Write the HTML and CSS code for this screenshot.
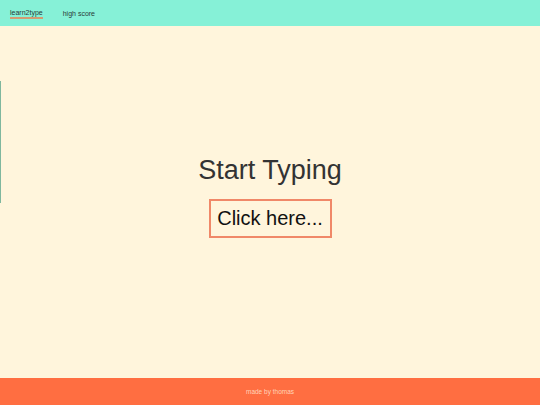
FILE: index.html
```html
<!DOCTYPE html>
<html>
<head>
<meta charset="utf-8">
<link rel="stylesheet" href="styles.css">
</head>
<body>
<div class="page">
  <header class="nav">
    <a class="nav-link active">learn2type</a>
    <a class="nav-link">high score</a>
  </header>
  <main class="main">
    <div class="edge"></div>
    <h1 class="title">Start Typing</h1>
    <button class="start">Click here...</button>
  </main>
  <footer class="footer">made by thomas</footer>
</div>
</body>
</html>
```
FILE: styles.css
```css
html, body { margin: 0; padding: 0; }
body {
  font-family: "Liberation Sans", Arial, sans-serif;
  background: #fff5dc;
}
.page {
  display: flex;
  flex-direction: column;
  height: 405px;
}
.nav {
  height: 26px;
  background: #86f1d7;
  display: flex;
  align-items: center;
  gap: 20px;
  padding: 2px 10px 0;
  box-sizing: border-box;
}
.nav-link {
  font-size: 7px;
  color: #2a3a37;
  line-height: 8px;
}
.nav-link.active {
  border-bottom: 2px solid #d39b72;
}
.main {
  flex: 1;
  position: relative;
  display: flex;
  flex-direction: column;
  align-items: center;
  padding-top: 126px;
  box-sizing: border-box;
}
.edge {
  position: absolute;
  left: 0;
  top: 55px;
  width: 1px;
  height: 122px;
  background: #7fb79e;
}
.title {
  margin: 0;
  font-weight: normal;
  font-size: 27px;
  line-height: 36px;
  color: #333;
}
.start {
  margin-top: 11px;
  font-family: inherit;
  font-size: 20px;
  color: #111;
  background: transparent;
  border: 2px solid #f08868;
  width: 123px;
  height: 39px;
  padding: 0;
}
.footer {
  height: 27px;
  background: #ff6e41;
  color: #ffd3b8;
  font-size: 6.5px;
  display: flex;
  align-items: center;
  justify-content: center;
}
```
